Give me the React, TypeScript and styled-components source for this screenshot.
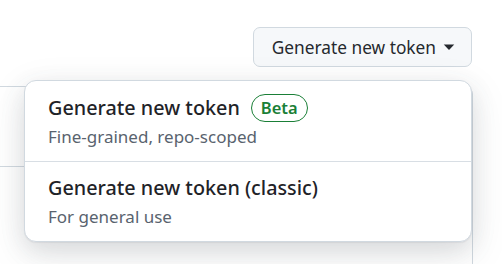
import React from "react";
import styled, { createGlobalStyle } from "styled-components";

const Global = createGlobalStyle`
  html, body { margin: 0; padding: 0; background: #ffffff; overflow: hidden; }
  body { font-family: "Noto Sans", "Liberation Sans", sans-serif; color: #1f2328; }
`;

const Page = styled.div`
  position: relative;
  width: 502px;
  height: 264px;
  overflow: hidden;
  padding-top: 27px;
  box-sizing: border-box;
`;

const TopRow = styled.div`
  display: flex;
  justify-content: flex-end;
  padding-right: 30px;
`;

const Button = styled.button`
  display: flex;
  align-items: center;
  gap: 7px;
  height: 40px;
  padding: 0 16px 0 18px;
  background: #f6f8fa;
  border: 1px solid #d1d9e0;
  border-radius: 7px;
  font-family: "Noto Sans", "Liberation Sans", sans-serif;
  font-size: 17.3px;
  font-weight: 450;
  color: #25292e;
  cursor: pointer;
`;

const Caret = styled.svg`
  width: 12px;
  height: 12px;
  fill: #25292e;
`;

const BackBox = styled.div`
  margin: 19px 29px 0 -20px;
  height: 200px;
  border: 1px solid #d1d9e0;
  border-radius: 0 8px 0 0;
`;

const BackDivider = styled.div`
  margin-top: 79px;
  border-top: 1px solid #d1d9e0;
`;

const Menu = styled.div`
  position: absolute;
  left: 24px;
  top: 80px;
  width: 448px;
  background: #ffffff;
  border: 1px solid #d1d9e0;
  border-radius: 12px;
  box-shadow: 0 1px 1px rgba(37, 41, 46, 0.06), 0 8px 24px rgba(66, 74, 83, 0.14), 0 12px 40px rgba(66, 74, 83, 0.1);
  box-sizing: border-box;
  overflow: hidden;
`;

const Item = styled.div<{ $divider?: boolean }>`
  display: flex;
  flex-direction: column;
  justify-content: center;
  gap: 3px;
  height: 80px;
  padding: 0 23px;
  box-sizing: border-box;
  border-top: ${(p) => (p.$divider ? "1px solid #d8dee4" : "none")};
`;

const TitleRow = styled.div`
  display: flex;
  align-items: center;
  gap: 11px;
`;

const Title = styled.span`
  font-size: 19.8px;
  font-weight: 500;
  color: #1f2328;
  line-height: 28px;
`;

const Desc = styled.span`
  font-size: 17px;
  color: #59636e;
  line-height: 24px;
`;

const Badge = styled.span`
  display: inline-flex;
  align-items: center;
  height: 26px;
  padding: 0 9px;
  border: 1.25px solid #1a7f37;
  border-radius: 999px;
  color: #1a7f37;
  font-size: 16.5px;
  font-weight: 600;
`;

export default function App() {
  return (
    <>
      <Global />
      <Page>
        <TopRow>
          <Button>
            Generate new token
            <Caret viewBox="0 0 16 16">
              <path d="M1 4.5h14L8 12z" />
            </Caret>
          </Button>
        </TopRow>
        <BackBox>
          <BackDivider />
        </BackBox>
        <Menu>
          <Item>
            <TitleRow>
              <Title>Generate new token</Title>
              <Badge>Beta</Badge>
            </TitleRow>
            <Desc>Fine-grained, repo-scoped</Desc>
          </Item>
          <Item $divider>
            <TitleRow>
              <Title>Generate new token (classic)</Title>
            </TitleRow>
            <Desc>For general use</Desc>
          </Item>
        </Menu>
      </Page>
    </>
  );
}
